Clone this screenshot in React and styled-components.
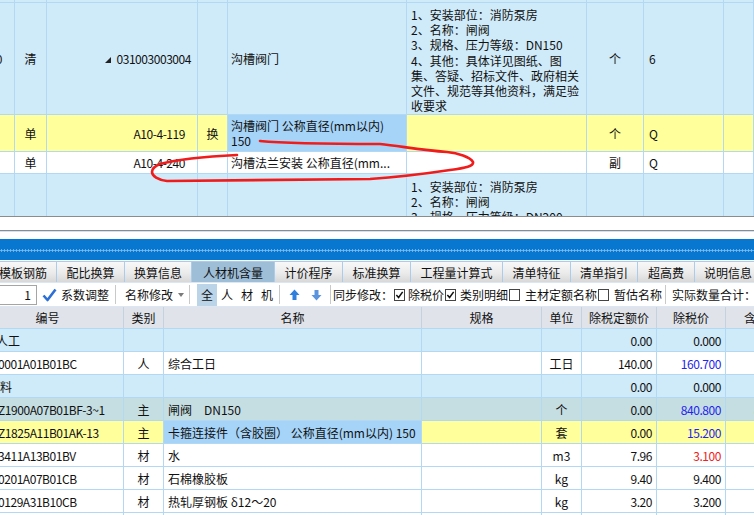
import React from 'react';
import styled, { createGlobalStyle } from 'styled-components';

const GlobalStyle = createGlobalStyle`
  * { box-sizing: border-box; }
  html, body { margin: 0; padding: 0; background: #fff; }
  body {
    font-family: "Noto Sans CJK SC", "Microsoft YaHei", sans-serif;
    font-size: 12px;
    color: #111;
  }
`;

const GRID = '#b3d8f3';
const LIGHT = '#cfeaf8';
const YELLOW = '#ffff9c';
const PICKED = '#a6d4f8';
const CURRENT = '#c4dee2';

const Screen = styled.div`
  position: relative;
  width: 754px;
  height: 515px;
  overflow: hidden;
  display: flex;
  flex-direction: column;
`;

/* ---------- top: 清单 grid ---------- */
const TopPane = styled.div`
  height: 217px;
  flex-shrink: 0;
  overflow: hidden;
  border-bottom: 1px solid #8c8c8c;
  background: ${LIGHT};
`;

const TopRow = styled.div`
  display: grid;
  grid-template-columns: 15px 32px 151px 30px 179px 180px 57px 80px 30px;
  height: ${p => p.$h}px;
  background: ${p => p.$bg || LIGHT};
  border-bottom: 1px solid ${GRID};
`;

const Cell = styled.div`
  display: flex;
  flex-direction: ${p => (p.$col ? 'column' : 'row')};
  align-items: ${p => (p.$col ? 'flex-start' : 'center')};
  justify-content: ${p => p.$justify || (p.$col ? 'center' : 'flex-start')};
  padding: ${p => p.$pt || 0}px ${p => p.$pr ?? 3}px 0 ${p => p.$pl ?? 3}px;
  border-right: 1px solid ${GRID};
  background: ${p => p.$bg || 'transparent'};
  overflow: hidden;
  white-space: nowrap;
  color: ${p => p.$color || '#111'};
  letter-spacing: ${p => (p.$tight ? '-0.45px' : 'normal')};
`;

const Shift = styled.span`
  margin-left: ${p => p.$x}px;
  flex-shrink: 0;
`;

const Line = styled.div`
  line-height: 15.2px;
  white-space: nowrap;
`;

const Tri = styled.span`
  display: inline-block;
  width: 0;
  height: 0;
  border-left: 6px solid transparent;
  border-bottom: 6px solid #222;
  margin-right: 5px;
  margin-top: 2px;
`;

/* ---------- splitter ---------- */
const Splitter = styled.div`
  height: 14px;
  flex-shrink: 0;
  border-bottom: 1px solid #8c8c8c;
`;

const BottomPane = styled.div`
  flex: 1;
  border-top: 1px solid #cfe3f3;
  padding-top: 7px;
  overflow: hidden;
`;

const BlueBand = styled.div`
  height: 21px;
  background: #0877d0;
  display: flex;
  align-items: center;
  margin-bottom: 1px;
`;

const Grip = styled.div`
  width: 100%;
  height: 3px;
  margin-top: 1px;
  background-image: radial-gradient(circle, #7dbcf0 45%, transparent 55%);
  background-size: 3px 3px;
`;

/* ---------- tabs ---------- */
const TabBar = styled.div`
  display: flex;
  height: 21px;
  margin-left: -10px;
  border-top: 1px solid #a9cdea;
  white-space: nowrap;
`;

const Tab = styled.div`
  flex-shrink: 0;
  width: ${p => p.$w}px;
  height: 100%;
  display: flex;
  align-items: center;
  justify-content: center;
  border-right: 1px solid #a9cdea;
  background: ${p => (p.$active ? '#9ebdd7' : 'linear-gradient(#f8f8f8, #ebebeb 55%, #d8d8d8)')};
`;

/* ---------- toolbar ---------- */
const Toolbar = styled.div`
  display: flex;
  align-items: center;
  height: 25px;
  border-top: 1px solid #dbe8f3;
  border-bottom: 1px solid #dbe8f3;
  white-space: nowrap;
`;

const NumBox = styled.div`
  width: 38px;
  height: 20px;
  margin-left: -1px;
  border: 1px solid #a5a5a5;
  display: flex;
  align-items: center;
  justify-content: flex-end;
  padding-right: 5px;
  flex-shrink: 0;
`;

const Item = styled.span`
  margin-left: ${p => p.$ml || 0}px;
  flex-shrink: 0;
  display: inline-flex;
  align-items: center;
`;

const Sep = styled.span`
  width: 1px;
  height: 19px;
  background: #c9c9c9;
  margin-left: ${p => p.$ml || 0}px;
  flex-shrink: 0;
`;

const Caret = styled.span`
  width: 0;
  height: 0;
  border-left: 3px solid transparent;
  border-right: 3px solid transparent;
  border-top: 4px solid #7a7a7a;
  margin-left: 5px;
  flex-shrink: 0;
`;

const KindBtn = styled.span`
  width: 20px;
  height: 22px;
  display: inline-flex;
  align-items: center;
  justify-content: center;
  background: ${p => (p.$on ? '#bcd4e8' : 'transparent')};
  flex-shrink: 0;
`;

const Box = styled.span`
  width: 11px;
  height: 12px;
  border: 1px solid #444;
  background: #fff;
  margin-left: ${p => p.$ml || 0}px;
  display: inline-flex;
  align-items: center;
  justify-content: center;
  flex-shrink: 0;
`;

/* ---------- 人材机 grid ---------- */
const bottomCols = '124px 40px 258px 120px 40px 75px 69px 73px';

const Head = styled.div`
  display: grid;
  grid-template-columns: ${bottomCols};
  width: 799px;
  height: 22px;
  background: #e0e3e9;
  border-bottom: 1px solid ${GRID};
`;

const HeadCell = styled.div`
  display: flex;
  align-items: center;
  justify-content: center;
  padding-right: ${p => p.$pr || 0}px;
  border-right: 1px solid #c4d2df;
  overflow: hidden;
  white-space: nowrap;
`;

const Row = styled.div`
  display: grid;
  grid-template-columns: ${bottomCols};
  width: 799px;
  height: 23px;
  background: ${p => p.$bg || '#fff'};
  border-bottom: 1px solid ${GRID};
`;

const Annotation = styled.svg`
  position: absolute;
  left: 0;
  top: 0;
  pointer-events: none;
`;

const CheckIcon = () => (
  <svg width="15" height="14" viewBox="0 0 15 14">
    <path d="M1.5 7.5 L5.5 12 L13.5 1.5" fill="none" stroke="#2c6fd6" strokeWidth="2.6" strokeLinejoin="round" />
  </svg>
);

const Arrow = ({ down }) => (
  <svg width="11" height="12" viewBox="0 0 11 12" style={down ? { transform: 'rotate(180deg)' } : undefined}>
    <path d="M5.5 0.5 L10.5 6 L7.5 6 L7.5 11 L3.5 11 L3.5 6 L0.5 6 Z" fill={down ? '#5b93dd' : '#2f7fdc'} />
  </svg>
);

const Tick = () => (
  <svg width="10" height="10" viewBox="0 0 10 10">
    <path d="M1.5 5 L4 7.8 L8.5 1.5" fill="none" stroke="#111" strokeWidth="1.7" />
  </svg>
);

const tabs = [
  ['模板钢筋', 67], ['配比换算', 68], ['换算信息', 67], ['人材机含量', 83, true],
  ['计价程序', 68], ['标准换算', 68], ['工程量计算式', 92], ['清单特征', 68],
  ['清单指引', 67], ['超高费', 57], ['说明信息', 67],
];

const rows = [
  { code: '人工', shift: -4, group: true, base: '0.00', price: '0.000' },
  { code: '0001A01B01BC', kind: '人', name: '综合工日', unit: '工日', base: '140.00', price: '160.700', pc: '#2424f0', tax: '174.300' },
  { code: '材料', shift: -12, group: true, base: '0.00', price: '0.000' },
  { code: 'Z1900A07B01BF-3~1', kind: '主', name: '闸阀\u3000DN150', unit: '个', base: '0.00', price: '840.800', pc: '#2424f0', tax: '866.020', bg: CURRENT },
  { code: 'Z1825A11B01AK-13', kind: '主', name: '卡箍连接件（含胶圈） 公称直径(mm以内) 150', unit: '套', base: '0.00', price: '15.200', pc: '#2424f0', tax: '15.660', bg: YELLOW, pick: true },
  { code: '3411A13B01BV', kind: '材', name: '水', unit: 'm3', base: '7.96', price: '3.100', pc: '#f02020', tax: '3.190' },
  { code: '0201A07B01CB', kind: '材', name: '石棉橡胶板', unit: 'kg', base: '9.40', price: '9.400', tax: '9.680' },
  { code: '0129A31B10CB', kind: '材', name: '热轧厚钢板 δ12～20', unit: 'kg', base: '3.20', price: '3.200', tax: '3.300' },
  { code: '', kind: '', name: '', unit: '', base: '', price: '' },
];

const desc1 = [
  '1、安装部位：消防泵房',
  '2、名称：闸阀',
  '3、规格、压力等级：DN150',
  '4、其他：具体详见图纸、图',
  '集、答疑、招标文件、政府相关',
  '文件、规范等其他资料，满足验',
  '收要求',
];

const desc2 = ['1、安装部位：消防泵房', '2、名称：闸阀', '3、规格、压力等级：DN200'];

export default function App() {
  return (
    <Screen>
      <GlobalStyle />
      <TopPane>
        <TopRow $h={3}>
          <Cell /><Cell /><Cell /><Cell /><Cell /><Cell /><Cell /><Cell /><Cell />
        </TopRow>
        <TopRow $h={112}>
          <Cell $pl={0}><Shift $x={-11}>10</Shift></Cell>
          <Cell $justify="center" $pl={0} $pr={0}>清</Cell>
          <Cell $justify="flex-end" $pr={6} $tight><Tri />031003003004</Cell>
          <Cell />
          <Cell>沟槽阀门</Cell>
          <Cell $col $justify="flex-start" $pt={4} $pl={4}>
            {desc1.map(t => <Line key={t}>{t}</Line>)}
          </Cell>
          <Cell $justify="center" $pl={0} $pr={0}>个</Cell>
          <Cell $pl={5}>6</Cell>
          <Cell />
        </TopRow>
        <TopRow $h={37} $bg={YELLOW}>
          <Cell />
          <Cell $justify="center" $pl={0} $pr={0}>单</Cell>
          <Cell $justify="flex-end" $pr={12} $tight>A10-4-119</Cell>
          <Cell $justify="center" $pl={0} $pr={0}>换</Cell>
          <Cell $col $bg={PICKED}>
            <Line>沟槽阀门 公称直径(mm以内)</Line>
            <Line>150</Line>
          </Cell>
          <Cell />
          <Cell $justify="center" $pl={0} $pr={0}>个</Cell>
          <Cell $pl={5}>Q</Cell>
          <Cell />
        </TopRow>
        <TopRow $h={22} $bg="#fff">
          <Cell />
          <Cell $justify="center" $pl={0} $pr={0}>单</Cell>
          <Cell $justify="flex-end" $pr={12} $tight>A10-4-240</Cell>
          <Cell />
          <Cell>沟槽法兰安装 公称直径(mm...</Cell>
          <Cell />
          <Cell $justify="center" $pl={0} $pr={0}>副</Cell>
          <Cell $pl={5}>Q</Cell>
          <Cell />
        </TopRow>
        <TopRow $h={60}>
          <Cell /><Cell /><Cell /><Cell /><Cell />
          <Cell $col $justify="flex-start" $pt={5} $pl={4}>
            {desc2.map(t => <Line key={t}>{t}</Line>)}
          </Cell>
          <Cell /><Cell /><Cell />
        </TopRow>
      </TopPane>

      <Splitter />

      <BottomPane>
        <BlueBand><Grip /></BlueBand>

        <TabBar>
          {tabs.map(([label, w, active]) => (
            <Tab key={label} $w={w} $active={active}>{label}</Tab>
          ))}
        </TabBar>

        <Toolbar>
          <NumBox>1</NumBox>
          <Item $ml={5}><CheckIcon /></Item>
          <Item $ml={4}>系数调整</Item>
          <Sep $ml={6} />
          <Item $ml={9}>名称修改</Item>
          <Caret />
          <Sep $ml={5} />
          <Item $ml={7}>
            <KindBtn $on>全</KindBtn>
            <KindBtn>人</KindBtn>
            <KindBtn>材</KindBtn>
            <KindBtn>机</KindBtn>
          </Item>
          <Sep $ml={2} />
          <Item $ml={9}><Arrow /></Item>
          <Item $ml={11}><Arrow down /></Item>
          <Sep $ml={8} />
          <Item $ml={2}>同步修改：</Item>
          <Box $ml={1}><Tick /></Box>
          <Item $ml={3}>除税价</Item>
          <Box $ml={1}><Tick /></Box>
          <Item $ml={4}>类别明细</Item>
          <Box $ml={1} />
          <Item $ml={5}>主材定额名称</Item>
          <Box $ml={1} />
          <Item $ml={5}>暂估名称</Item>
          <Sep $ml={3} />
          <Item $ml={6}>实际数量合计：</Item>
        </Toolbar>

        <Head>
          <HeadCell $pr={28}>编号</HeadCell>
          <HeadCell>类别</HeadCell>
          <HeadCell>名称</HeadCell>
          <HeadCell>规格</HeadCell>
          <HeadCell>单位</HeadCell>
          <HeadCell>除税定额价</HeadCell>
          <HeadCell>除税价</HeadCell>
          <HeadCell>含税价</HeadCell>
        </Head>

        {rows.map((r, i) => (
          <Row key={i} $bg={r.group ? LIGHT : r.bg}>
            <Cell $pl={0} $tight={!r.group}><Shift $x={r.shift ?? -2}>{r.code}</Shift></Cell>
            <Cell $justify="center" $pl={0} $pr={0}>{r.kind}</Cell>
            <Cell $pl={4} $bg={r.pick ? PICKED : undefined}>{r.name}</Cell>
            <Cell />
            <Cell $justify="center" $pl={0} $pr={0}>{r.unit}</Cell>
            <Cell $justify="flex-end" $pr={4} $tight>{r.base}</Cell>
            <Cell $justify="flex-end" $pr={4} $tight $color={r.pc}>{r.price}</Cell>
            <Cell $justify="flex-end" $pr={4} $tight>{r.tax}</Cell>
          </Row>
        ))}
      </BottomPane>

      <Annotation width="754" height="515" viewBox="0 0 754 515">
        <path
          d="M260 141 C 290 144, 340 144, 380 144 C 400 146, 420 150, 447 152 C 458 153, 470 157, 473 162 C 474 166, 466 168, 450 170 C 430 173, 400 177, 370 179 C 330 180, 250 180, 167 181 C 158 180, 152 176, 152 172 C 152 168, 155 166, 160 164 C 175 160, 195 157, 237 155"
          fill="none"
          stroke="#f01c1c"
          strokeWidth="2.6"
          strokeLinecap="round"
          strokeLinejoin="round"
        />
      </Annotation>
    </Screen>
  );
}
